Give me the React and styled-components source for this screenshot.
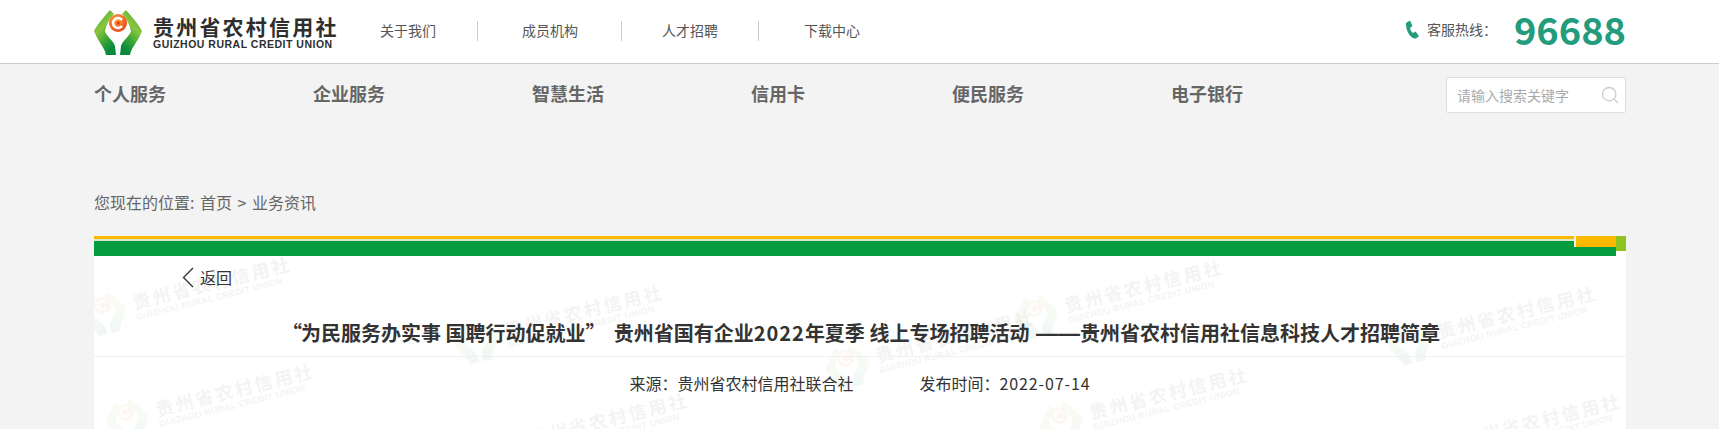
import styled, { createGlobalStyle } from 'styled-components';
import { Search } from 'lucide-react';

const GlobalStyle = createGlobalStyle`
	html, body {
		margin: 0;
		height: 429px;
		overflow: hidden;
		background: #f3f3f3;
		font-family: "Noto Sans CJK SC", "Noto Sans", sans-serif;
		color: #333;
	}
`;

const Wrap = styled.div`
	padding: 0 93px 0 94px;
`;

const Header = styled.header`
	background: #fff;
	border-bottom: 1px solid #ccc;
`;

const HeaderRow = styled(Wrap)`
	display: flex;
	align-items: center;
	height: 63px;
`;

const Brand = styled.div`
	display: flex;
	align-items: center;
	gap: 11px;
	width: 286px;
	padding-top: 1px;
`;

const BrandText = styled.div`
	display: flex;
	flex-direction: column;
	color: #2e2e2e;
`;

const BrandCn = styled.span`
	font-size: 21px;
	font-weight: 700;
	line-height: 25px;
	letter-spacing: 2.2px;
	white-space: nowrap;
`;

const BrandEn = styled.span`
	font-family: "Liberation Sans", Arial, sans-serif;
	font-size: 10.5px;
	font-weight: 700;
	line-height: 11px;
	letter-spacing: 0.5px;
	white-space: nowrap;
`;

const TopLinks = styled.nav`
	display: flex;
	align-items: center;
	margin-bottom: 2px;
`;

const TopLink = styled.a`
	font-size: 14px;
	line-height: 18px;
	color: #555;
	width: ${({ $w }) => $w}px;
	padding-left: ${({ $pad }) => $pad}px;
	box-sizing: border-box;
	border-right: ${({ $last }) => ($last ? 'none' : '1px solid #ccc')};
	height: 20px;
	white-space: nowrap;
`;

const Hotline = styled.div`
	margin-left: auto;
	margin-bottom: 6px;
	display: flex;
	align-items: center;
	color: #555;
	font-size: 14px;
`;

const PhoneIcon = styled.svg`
	width: 15px;
	height: 19px;
	margin-right: 7px;
	margin-top: 2px;
	fill: #239c7e;
`;

const HotNumber = styled.span`
	font-size: 38px;
	font-weight: 700;
	line-height: 44px;
	color: #239c7e;
	margin-left: 17px;
`;

const MainNavRow = styled(Wrap)`
	display: flex;
	align-items: center;
	justify-content: space-between;
	padding-top: 13px;
`;

const MainNav = styled.nav`
	display: flex;
	gap: 147px;
`;

const MainLink = styled.a`
	font-size: 18px;
	font-weight: 700;
	line-height: 32px;
	padding-bottom: 4px;
	color: #666;
`;

const SearchBox = styled.div`
	width: 180px;
	height: 36px;
	box-sizing: border-box;
	display: flex;
	align-items: center;
	justify-content: space-between;
	padding: 0 5px 0 10px;
	background: #fff;
	border: 1px solid #ddd;
	border-radius: 2px;
	font-size: 14px;
	color: #aaa;
`;

const Crumbs = styled(Wrap)`
	display: flex;
	margin-top: 73px;
	font-size: 16px;
	line-height: 32px;
	color: #666;
	white-space: pre;
	word-spacing: 2px;
`;

const Page = styled(Wrap)`
	margin-top: 18px;
`;

const Card = styled.section`
	position: relative;
	height: 193px;
	overflow: hidden;
	background: #fff;
`;

const Banner = styled.div`
	position: relative;
	z-index: 1;
	display: flex;
	align-items: flex-start;
`;

const BannerBar = styled.div`
	position: relative;
	flex: 1;
	height: 20px;
	box-sizing: border-box;
	border-top: 3px solid #fdb900;
	padding-top: 2px;
	background: #d8e8c8;
`;

const BannerGreen = styled.div`
	height: 15px;
	background: #059c40;
`;

const BannerTab = styled.div`
	position: absolute;
	top: -3px;
	right: 0;
	width: 40px;
	height: 11px;
	background: #fdb900;
	box-shadow: -2px 0 0 #eef4e4;
`;

const BannerEnd = styled.div`
	width: 10px;
	height: 15px;
	background: #8fc31f;
`;

const Content = styled.div`
	position: relative;
	z-index: 1;
`;

const BackLink = styled.a`
	display: flex;
	align-items: center;
	gap: 6px;
	height: 42px;
	padding-left: 88px;
	font-size: 16px;
	color: #333;
`;

const Title = styled.h1`
	margin: 0;
	padding: 12px 0 0 2px;
	height: 46px;
	border-bottom: 1px solid #f0f0f0;
	font-size: 20px;
	font-weight: 700;
	line-height: 46px;
	text-align: center;
	color: #333;
	white-space: pre;
`;

const Quote = styled.span`
	letter-spacing: -1px;
`;

const Year = styled.span`
	letter-spacing: 1px;
`;

const Dash = styled.span`
	font-family: "Liberation Sans", Arial, sans-serif;
	font-size: 22px;
	margin-left: 2px;
`;

const Meta = styled.div`
	display: flex;
	justify-content: center;
	gap: 66px;
	font-size: 16px;
	line-height: 52px;
	color: #333;
`;

const MetaDate = styled.span`
	letter-spacing: 0.9px;
`;

const Mark = styled.div`
	position: absolute;
	left: ${({ $x }) => $x}px;
	top: ${({ $y }) => $y}px;
	display: flex;
	align-items: center;
	gap: 8px;
	width: 216px;
	opacity: 0.05;
	transform: rotate(-14deg);
	pointer-events: none;
`;

const MarkCn = styled(BrandCn)`
	font-size: 18px;
	line-height: 22px;
	letter-spacing: 2.4px;
`;

const MarkEn = styled(BrandEn)`
	font-size: 9px;
	letter-spacing: 0.3px;
`;

const WING = 'M16 0 L20 4 C15 10 12 15 11 21 C12 26 19 30 21 36 L22 45 L12 45 C11 38 3 30 0 21 C5 12 11 6 16 0Z';

const LogoMark = ({ width, height }) => (
	<svg width={width} height={height} viewBox="0 0 48 45" style={{ flex: 'none' }}>
		<defs>
			<linearGradient id="wing" x1="0" y1="0" x2="0.5" y2="1">
				<stop offset="0" stopColor="#2f9e36" />
				<stop offset="0.45" stopColor="#8cc63f" />
				<stop offset="0.75" stopColor="#3aa537" />
				<stop offset="1" stopColor="#0c8a3c" />
			</linearGradient>
			<radialGradient id="coin" cx="0.4" cy="0.35" r="0.75">
				<stop offset="0" stopColor="#fbb03b" />
				<stop offset="1" stopColor="#e8381b" />
			</radialGradient>
		</defs>
		<path d={WING} fill="url(#wing)" />
		<path d={WING} fill="url(#wing)" transform="matrix(-1 0 0 1 48 0)" />
		<circle cx="24" cy="13" r="9" fill="url(#coin)" />
		<path d="M28 10 A5 5 0 1 0 28 16" fill="none" stroke="#fff" strokeWidth="2.4" />
		<rect x="22.5" y="11.5" width="3" height="3" fill="#e8381b" />
	</svg>
);

const COLON = '\uFF1A';

// the end of the watermark text (the last character) as measured on the page
const MARK_ENDS = [
	[280, 263],
	[652, 291],
	[1023, 316],
	[1212, 266],
	[1585, 292],
	[303, 370],
	[677, 399],
	[1237, 373],
	[1610, 400],
];

const Watermark = ({ end }) => (
	<Mark $x={end[0] - 92 - 108 - 94} $y={end[1] + 33 - 24 - 236}>
		<LogoMark width={44} height={42} />
		<BrandText>
			<MarkCn>贵州省农村信用社</MarkCn>
			<MarkEn>GUIZHOU RURAL CREDIT UNION</MarkEn>
		</BrandText>
	</Mark>
);

const App = () => (
	<>
		<GlobalStyle />
		<Header>
			<HeaderRow>
				<Brand>
					<LogoMark width={48} height={45} />
					<BrandText>
						<BrandCn>贵州省农村信用社</BrandCn>
						<BrandEn>GUIZHOU RURAL CREDIT UNION</BrandEn>
					</BrandText>
				</Brand>
				<TopLinks>
					<TopLink $w={98} $pad={0}>关于我们</TopLink>
					<TopLink $w={144} $pad={44}>成员机构</TopLink>
					<TopLink $w={137} $pad={40}>人才招聘</TopLink>
					<TopLink $w={110} $pad={45} $last>下载中心</TopLink>
				</TopLinks>
				<Hotline>
					<PhoneIcon viewBox="0 0 15 19">
						<path d="M1 3 L5 0.5 L7.5 6 L5 8 C5.3 10 6.5 12 8 13 L10.5 11.5 L14 16 L11 18.5 C6 19.5 0.5 11 1 3Z" />
					</PhoneIcon>
					客服热线{COLON}
					<HotNumber>96688</HotNumber>
				</Hotline>
			</HeaderRow>
		</Header>
		<MainNavRow>
			<MainNav>
				<MainLink>个人服务</MainLink>
				<MainLink>企业服务</MainLink>
				<MainLink>智慧生活</MainLink>
				<MainLink>信用卡</MainLink>
				<MainLink>便民服务</MainLink>
				<MainLink>电子银行</MainLink>
			</MainNav>
			<SearchBox>
				请输入搜索关键字
				<Search size={20} strokeWidth={1.6} color="#ccc" />
			</SearchBox>
		</MainNavRow>
		<Crumbs>您现在的位置: 首页 &gt; 业务资讯</Crumbs>
		<Page>
			<Card>
				{MARK_ENDS.map((end) => (
					<Watermark key={end.join()} end={end} />
				))}
				<Banner>
					<BannerBar>
						<BannerGreen />
						<BannerTab />
					</BannerBar>
					<BannerEnd />
				</Banner>
				<Content>
					<BackLink>
						<svg width="12" height="21" viewBox="0 0 12 21">
							<path d="M11 1 L1.5 10.5 L11 20" fill="none" stroke="#333" strokeWidth="1.4" />
						</svg>
						返回
					</BackLink>
					<Title><Quote>“</Quote>为民服务办实事 国聘行动促就业<Quote>”</Quote>  贵州省国有企业<Year>2022</Year>年夏季 线上专场招聘活动 <Dash>——</Dash>贵州省农村信用社信息科技人才招聘简章</Title>
					<Meta>
						<span>来源{COLON}贵州省农村信用社联合社</span>
						<span>发布时间{COLON}<MetaDate>2022-07-14</MetaDate></span>
					</Meta>
				</Content>
			</Card>
		</Page>
	</>
);

export default App;
